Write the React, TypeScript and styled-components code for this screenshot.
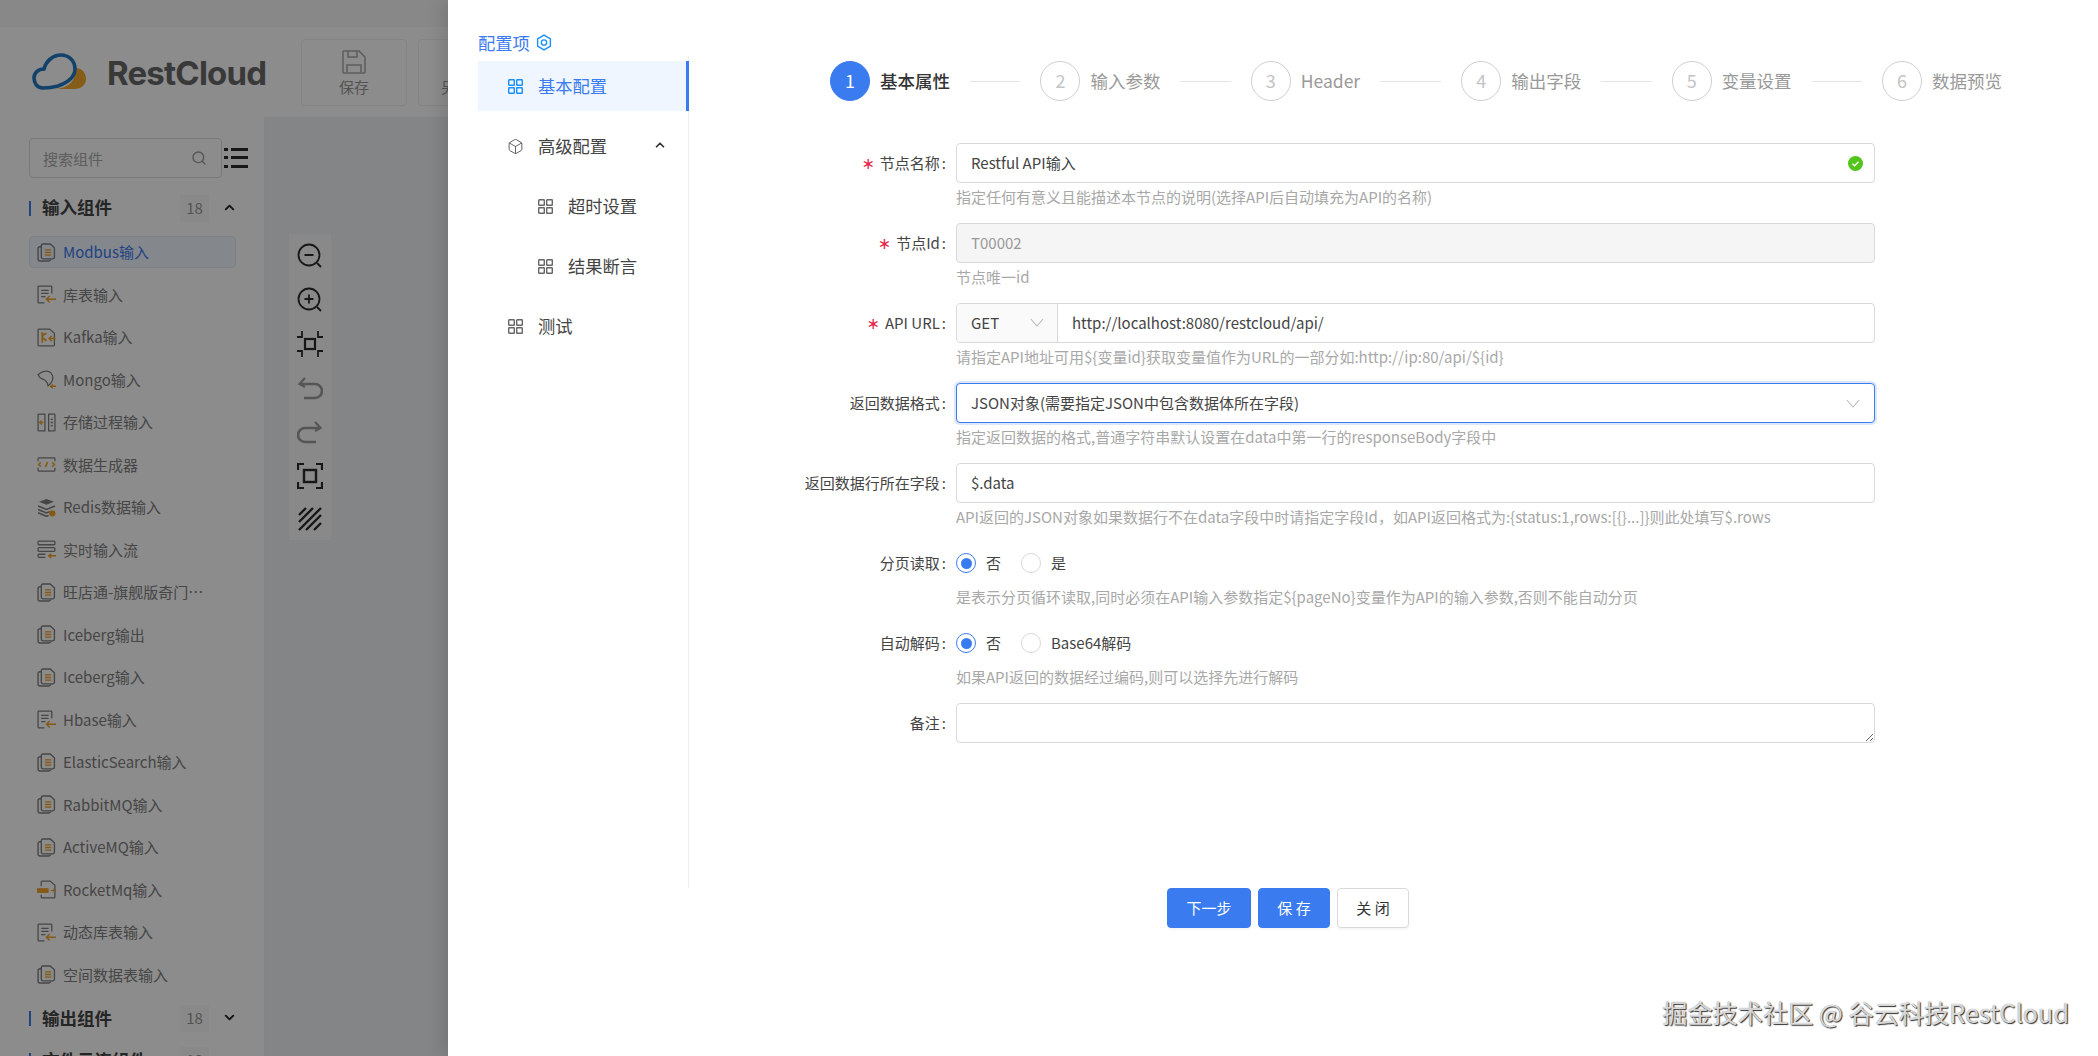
import React from 'react';
import styled, { createGlobalStyle } from 'styled-components';
import { ChevronDown, ChevronUp, Box, Search } from 'lucide-react';

const GlobalStyle = createGlobalStyle`
  html, body {
    margin: 0;
    height: 100%;
    overflow: hidden;
    background: #fff;
  }
  body, input, textarea, button {
    font-family: "Noto Sans CJK SC", "Noto Sans", sans-serif;
  }
  * { box-sizing: border-box; }
`;

const BLUE = '#3b7bf0';

const Page = styled.div`
  position: relative;
  width: 100vw;
  height: 100vh;
  overflow: hidden;
  display: flex;
  flex-direction: column;
  background: #fff;
`;

const Header = styled.div`
  flex: 0 0 117px;
  display: flex;
  align-items: flex-start;
  background: #fff;
  border-top: 27px solid #f8f8f8;
  padding: 12px 0 0 32px;
`;

const Brand = styled.div`
  display: flex;
  align-items: center;
  width: 269px;
  height: 66px;
  gap: 20px;
`;

const BrandName = styled.div`
  font-family: Inter, "Liberation Sans", sans-serif;
  font-size: 33px;
  font-weight: 700;
  letter-spacing: -0.8px;
  color: #686868;
  margin-top: 2px;
`;

const ToolButton = styled.div`
  width: 106px;
  height: 67px;
  margin-right: 11px;
  border: 1px solid #f1f1f1;
  border-radius: 4px;
  display: flex;
  flex-direction: column;
  align-items: center;
  gap: 3px;
  padding-top: 10px;
  color: #999;
  font-size: 15px;
  line-height: 20px;
`;

const Body = styled.div`
  flex: 1;
  display: flex;
  min-height: 0;
`;

const Sidebar = styled.div`
  width: 265px;
  padding: 21px 0 0 29px;
  background: #fff;
  border-right: 1px solid #eef0f2;
`;

const SearchRow = styled.div`
  display: flex;
  align-items: center;
  gap: 2px;
  margin-bottom: 16px;
`;

const SearchBox = styled.div`
  width: 193px;
  height: 40px;
  border: 1px solid #dcdcdc;
  border-radius: 4px;
  display: flex;
  align-items: center;
  justify-content: space-between;
  padding: 0 14px 0 13px;
  font-size: 15px;
  color: #aaa;
`;

const GroupRow = styled.div`
  display: flex;
  align-items: center;
  height: 28px;
  margin-bottom: 14px;

  & + & {
    margin-top: 1px;
  }
`;

const GroupBar = styled.span`
  width: 2px;
  height: 15px;
  background: ${BLUE};
  margin-right: 11px;
`;

const GroupName = styled.span`
  width: 138px;
  padding-bottom: 3px;
  font-size: 17.5px;
  font-weight: 700;
  color: #444;
`;

const Badge = styled.span`
  width: 29px;
  height: 27px;
  background: #fafafa;
  color: #999;
  font-size: 15px;
  line-height: 26px;
  text-align: center;
`;

const GroupArrow = styled.span`
  margin-left: 13px;
  display: flex;
  color: #222;
  padding-bottom: 2px;
`;

const ItemList = styled.div`
  display: flex;
  flex-direction: column;
  gap: 10.5px;
  margin-bottom: 14px;
`;

const Item = styled.div<{ $active?: boolean }>`
  width: 207px;
  height: 32px;
  display: flex;
  align-items: center;
  gap: 7px;
  padding-left: 7px;
  border: 1px solid ${(p) => (p.$active ? '#e2e8f4' : 'transparent')};
  border-radius: 4px;
  background: ${(p) => (p.$active ? '#f1f6ff' : 'transparent')};
  color: ${(p) => (p.$active ? BLUE : '#808080')};
  font-size: 15px;
`;

const ItemText = styled.span`
  max-width: 142px;
  margin-top: -1px;
  white-space: nowrap;
  overflow: hidden;
  text-overflow: ellipsis;
`;

const Canvas = styled.div`
  flex: 1;
  background: #f0f2f5;
  padding: 117px 0 0 24px;
`;

const ZoomBar = styled.div`
  width: 42px;
  height: 306px;
  background: #fafafa;
  display: flex;
  flex-direction: column;
  align-items: center;
  justify-content: space-between;
  padding: 9px 0 9px;
`;

const Overlay = styled.div`
  position: absolute;
  inset: 0;
  background: rgba(0, 0, 0, 0.45);
`;

const Drawer = styled.div`
  position: absolute;
  top: 0;
  right: 0;
  bottom: 0;
  left: 448px;
  background: #fff;
  display: flex;
  box-shadow: -6px 0 16px rgba(0, 0, 0, 0.12);
`;

const ConfigColumn = styled.div`
  flex: 0 0 241px;
  padding: 29px 0 0 30px;
`;

const ConfigTitle = styled.div`
  display: flex;
  align-items: center;
  gap: 6px;
  height: 27px;
  font-size: 17.3px;
  line-height: 27px;
  color: ${BLUE};
`;

const Menu = styled.div`
  width: 211px;
  height: 832px;
  padding-top: 5px;
  border-right: 1px solid #eeeeee;
`;

const MenuItem = styled.div<{ $active?: boolean; $sub?: boolean }>`
  position: relative;
  height: 50px;
  margin-bottom: 10px;
  width: 211px;
  display: flex;
  align-items: center;
  gap: 15px;
  padding-left: ${(p) => (p.$sub ? 60 : 30)}px;
  padding-bottom: 2px;
  font-size: 17.3px;
  color: ${(p) => (p.$active ? BLUE : '#444')};
  background: ${(p) => (p.$active ? '#eff6ff' : 'transparent')};
  border-right: ${(p) => (p.$active ? `3px solid ${BLUE}` : '0')};

  & > svg {
    margin-top: 3px;
  }
`;

const CubeIcon = styled(Box)`
  margin: 3px -1px 0 -1px;
`;

const MenuArrow = styled.span`
  margin-left: 31px;
  display: flex;
  color: #333;
`;

const MainColumn = styled.div`
  flex: 1;
  padding-top: 61px;
`;

const Steps = styled.div`
  display: flex;
  width: 1172px;
  margin-left: 141px;
  height: 40px;
  margin-bottom: 42px;
`;

const Step = styled.div<{ $last?: boolean }>`
  display: flex;
  align-items: center;
  flex: ${(p) => (p.$last ? '0 0 auto' : '1 1 0')};
`;

const StepDot = styled.div<{ $active?: boolean }>`
  flex: 0 0 40px;
  height: 40px;
  border-radius: 50%;
  border: 1px solid ${(p) => (p.$active ? BLUE : '#cfcfcf')};
  background: ${(p) => (p.$active ? BLUE : '#fff')};
  color: ${(p) => (p.$active ? '#fff' : '#c4c4c4')};
  display: flex;
  align-items: center;
  justify-content: center;
  padding-bottom: 2px;
  font-size: 18px;
`;

const StepTitle = styled.div<{ $active?: boolean }>`
  margin-left: 10px;
  padding-bottom: 2px;
  font-size: 17.5px;
  white-space: nowrap;
  font-weight: ${(p) => (p.$active ? 500 : 400)};
  color: ${(p) => (p.$active ? '#333' : '#999')};
`;

const StepLine = styled.div`
  flex: 1;
  height: 1px;
  margin: 0 20px;
  background: #e4e4e4;
`;

const FormRow = styled.div`
  display: flex;
  margin-bottom: 10px;
`;

const LabelCol = styled.div`
  flex: 0 0 267px;
  height: 40px;
  padding: 0 10px 2px 0;
  display: flex;
  align-items: center;
  justify-content: flex-end;
  font-size: 15px;
  color: #444;
  white-space: nowrap;
`;

const Star = styled.span`
  color: #e0284a;
  margin-right: 5px;
  margin-top: 2px;
  font-size: 16px;
  font-family: "DejaVu Sans", sans-serif;
`;

const Colon = styled.span`
  margin-left: 2px;
`;

const FieldCol = styled.div`
  flex: 0 0 919px;
`;

const FieldBox = styled.div<{ $focused?: boolean; $disabled?: boolean }>`
  position: relative;
  height: 40px;
  display: flex;
  align-items: center;
  border: 1px solid ${(p) => (p.$focused ? BLUE : '#d9d9d9')};
  border-radius: 4px;
  background: ${(p) => (p.$disabled ? '#f5f5f5' : '#fff')};
  box-shadow: ${(p) => (p.$focused ? '0 0 0 2px rgba(59, 123, 240, 0.18)' : 'none')};
  overflow: hidden;
`;

const TextInput = styled.input<{ $disabled?: boolean }>`
  flex: 1;
  height: 100%;
  min-width: 0;
  border: 0;
  outline: 0;
  padding: 0 14px 2px;
  background: transparent;
  font-size: 15px;
  color: ${(p) => (p.$disabled ? '#999' : '#444')};
`;

const MethodSelect = styled.div`
  flex: 0 0 101px;
  height: 100%;
  background: #fafafa;
  border-right: 1px solid #d9d9d9;
  display: flex;
  align-items: center;
  justify-content: space-between;
  padding: 0 13px 2px 11px;
  font-size: 15px;
  color: #444;

  & > span {
    padding-left: 3px;
  }
`;

const SelectText = styled.div`
  flex: 1;
  padding: 0 0 2px 14px;
  font-size: 15px;
  color: #444;
`;

const SuccessMark = styled.span`
  display: flex;
  margin-right: 11px;
`;

const SelectArrow = styled.span`
  display: flex;
  margin-right: 14px;
`;

const Hint = styled.div`
  height: 30px;
  line-height: 28px;
  font-size: 15px;
  color: #a8a8a8;
  white-space: nowrap;
`;

const RadioRow = styled.div`
  height: 40px;
  display: flex;
  align-items: center;
  font-size: 15px;
  color: #444;
`;

const RadioOption = styled.div`
  display: flex;
  align-items: center;
  gap: 10px;
  margin-right: 20px;
  padding-bottom: 2px;
`;

const RadioDot = styled.span<{ $checked?: boolean }>`
  width: 20px;
  height: 20px;
  margin-top: 2px;
  border-radius: 50%;
  border: 1px solid ${(p) => (p.$checked ? BLUE : '#d9d9d9')};
  display: flex;
  align-items: center;
  justify-content: center;
  &::after {
    content: '';
    width: 11px;
    height: 11px;
    border-radius: 50%;
    background: ${(p) => (p.$checked ? BLUE : 'transparent')};
  }
`;

const NoteArea = styled.textarea`
  display: block;
  width: 100%;
  height: 40px;
  border: 1px solid #d9d9d9;
  border-radius: 4px;
  outline: 0;
  resize: vertical;
  font-size: 15px;
`;

const Footer = styled.div`
  display: flex;
  gap: 7px;
  margin: 145px 0 0 478px;
`;

const FooterButton = styled.button<{ $primary?: boolean; $w: number }>`
  width: ${(p) => p.$w}px;
  height: 40px;
  padding: 0 0 2px;
  border-radius: 4px;
  border: 1px solid ${(p) => (p.$primary ? BLUE : '#d9d9d9')};
  background: ${(p) => (p.$primary ? BLUE : '#fff')};
  color: ${(p) => (p.$primary ? '#fff' : '#333')};
  font-size: 15px;
  box-shadow: 0 2px 0 rgba(0, 0, 0, 0.03);
`;

const Watermark = styled.div`
  position: absolute;
  right: 29px;
  bottom: 27px;
  font-size: 25.2px;
  line-height: 34px;
  white-space: nowrap;
  color: rgba(255, 255, 255, 0.8);
  text-shadow: 1px 1px 1px #333, 0 0 1px #666;
`;

const Logo = () => (
  <svg width="55" height="38" viewBox="0 0 55 38" fill="none">
    <path d="M44 15c6 0 10 5 10 11 0 6-5 10-12 10H24c10-1 20-6 20-21z" fill="#f2a92e" />
    <path
      d="M11 35C5 35 2 30 2 25c0-5 4-9 10-9 2-8 9-14 17-14 8 0 14 6 14 14 0 9-9 14-17 17-5 1.400-10 2-15 2z"
      stroke="#2178c2"
      strokeWidth="3.600"
    />
  </svg>
);

const SaveIcon = () => (
  <svg width="24" height="24" viewBox="0 0 24 24" fill="none" stroke="#a8a8a8" strokeWidth="1.500">
    <path d="M2 1h15l6 6v15a1 1 0 0 1-1 1H2a1 1 0 0 1-1-1V2a1 1 0 0 1 1-1z" />
    <path d="M6 1v6h9V1M5 22v-7h14v7" />
  </svg>
);

const ListIcon = () => (
  <svg width="24" height="22" viewBox="0 0 24 22" fill="#2a2a2a">
    <rect x="0" y="1" width="4" height="3" />
    <rect x="7" y="1" width="17" height="3" />
    <rect x="0" y="9" width="4" height="3" />
    <rect x="7" y="9" width="17" height="3" />
    <rect x="0" y="18" width="4" height="3" />
    <rect x="7" y="18" width="17" height="3" />
  </svg>
);

const iconLine = '#808080';
const iconMark = '#f0a428';

const DocIcon = () => (
  <svg width="19" height="19" viewBox="0 0 18 18" fill="none" stroke={iconLine} strokeWidth="1.300">
    <path d="M4 3.500H2.800A1.800 1.800 0 0 0 1 5.300v9.900A1.800 1.800 0 0 0 2.800 17h8.400a2 2 0 0 0 1.800-1.500" />
    <path d="M5.500 1h7l4 3.600v9a1.400 1.400 0 0 1-1.400 1.400H5.500a1.400 1.400 0 0 1-1.400-1.400V2.400A1.400 1.400 0 0 1 5.500 1z" />
    <path d="M7.500 6.500h6M7.500 9h6M7.500 11.500h6" stroke={iconMark} />
  </svg>
);

const TableIcon = () => (
  <svg width="19" height="19" viewBox="0 0 18 18" fill="none" stroke={iconLine} strokeWidth="1.200">
    <path d="M7 17H1.800A.800.800 0 0 1 1 16.200V1.800A.800.800 0 0 1 1.800 1h11.400a.800.800 0 0 1 .800.800V8" />
    <path d="M4 5h7M4 8h7M4 11h4" />
    <path d="M18 13.500h-9M12 10.500l-3 3 3 3" stroke={iconMark} strokeWidth="1.400" />
  </svg>
);

const KafkaIcon = () => (
  <svg width="19" height="19" viewBox="0 0 18 18" fill="none" stroke={iconLine} strokeWidth="1.200">
    <path d="M1.800 1H12l4.500 4v11.200a.800.800 0 0 1-.800.800H1.800a.800.800 0 0 1-.800-.800V1.800A.800.800 0 0 1 1.800 1z" />
    <path d="M5 4v10M5 7l4-2M5 9l4 3" stroke={iconMark} strokeWidth="1.700" />
    <path d="M17.500 10h-6M14 7.500L11.500 10l2.500 2.500" stroke={iconMark} strokeWidth="1.400" />
  </svg>
);

const LeafIcon = () => (
  <svg width="19" height="19" viewBox="0 0 18 18" fill="none" stroke={iconLine} strokeWidth="1.200">
    <path d="M1 4.500C3 2.500 6 1 9 1c3.500 0 6 3 6 6.500 0 3-2 5.500-4.500 7.500C10 11.500 8 9.500 5 8.500 3 7.800 1.700 6.300 1 4.500z" />
    <path d="M18 15.500h-5M15 13.800l-2 1.700 2 1.700" stroke={iconMark} strokeWidth="1.400" />
  </svg>
);

const SplitIcon = () => (
  <svg width="19" height="19" viewBox="0 0 18 18" fill="none" stroke={iconLine} strokeWidth="1.200">
    <path d="M7.500 1H1.700a.700.700 0 0 0-.700.700v14.600a.700.700 0 0 0 .700.700h5.800V1zM11 1h5.300a.700.700 0 0 1 .700.700v14.600a.700.700 0 0 1-.700.700H11V1z" />
    <path d="M6 9H2.500M4.500 7L2.500 9l2 2" stroke={iconMark} strokeWidth="1.300" />
    <path d="M13 6h2M13 9h2M13 12h2" />
  </svg>
);

const CodeIcon = () => (
  <svg width="19" height="19" viewBox="0 0 18 18" fill="none" stroke={iconLine} strokeWidth="1.200">
    <path d="M1 6V3.500a.800.800 0 0 1 .800-.800h14.400a.800.800 0 0 1 .800.800V6M1 12v2.500a.800.800 0 0 0 .800.800h14.400a.800.800 0 0 0 .800-.800V12" />
    <path d="M3.600 7L1.500 9l2.100 2M14.400 7l2.100 2-2.100 2M10 6.500L8 11.500" stroke={iconMark} strokeWidth="1.400" />
  </svg>
);

const RedisIcon = () => (
  <svg width="19" height="19" viewBox="0 0 18 18" fill="none">
    <path d="M9 1l7 2.600-7 2.800L2 3.600z" fill={iconLine} />
    <path d="M1 7.500l8 3.300 8-3.300M1 10.800l8 3.300 3-1.200M1 14l8 3.300 2-.800" stroke={iconLine} strokeWidth="1.500" />
    <circle cx="14.500" cy="14.500" r="3" fill={iconMark} />
  </svg>
);

const StreamIcon = () => (
  <svg width="19" height="19" viewBox="0 0 18 18" fill="none" stroke={iconLine} strokeWidth="1.200">
    <rect x="1" y="1" width="16" height="3.500" rx="1" />
    <rect x="1" y="7.200" width="16" height="3.500" rx="1" />
    <path d="M8 13.500H2a1 1 0 0 0-1 1v1a1 1 0 0 0 1 1h6" />
    <path d="M18 15h-7M13.500 13L11 15l2.500 2" stroke={iconMark} strokeWidth="1.400" />
  </svg>
);

const RocketIcon = () => (
  <svg width="19" height="19" viewBox="0 0 18 18" fill="none" stroke={iconLine} strokeWidth="1.200">
    <path d="M4 6V2a1 1 0 0 1 1-1h7.500L17 5v11a1 1 0 0 1-1 1H5a1 1 0 0 1-1-1v-2" />
    <path d="M0 10h11" stroke={iconMark} strokeWidth="4.500" />
    <path d="M13 10h4M15.500 8.500L17 10l-1.500 1.500" stroke={iconMark} strokeWidth="1" />
  </svg>
);

const barStroke = { fill: 'none', stroke: '#2a2a2a', strokeWidth: 1.800 };
const barFade = { fill: 'none', stroke: '#9c9c9c', strokeWidth: 2.600 };

const ZoomOutIcon = () => (
  <svg width="26" height="26" viewBox="0 0 26 26" {...barStroke}>
    <circle cx="12" cy="12" r="10.500" />
    <path d="M7.500 12h9M20 20l4 4" />
  </svg>
);

const ZoomInIcon = () => (
  <svg width="26" height="26" viewBox="0 0 26 26" {...barStroke}>
    <circle cx="12" cy="12" r="10.500" />
    <path d="M7.500 12h9M12 7.500v9M20 20l4 4" />
  </svg>
);

const FitIcon = () => (
  <svg width="28" height="28" viewBox="0 0 28 28" {...barStroke}>
    <rect x="9" y="9" width="10" height="10" strokeWidth="2.200" />
    <path d="M1 7h5V1M27 7h-5V1M1 21h5v6M27 21h-5v6" />
  </svg>
);

const UndoIcon = () => (
  <svg width="26" height="26" viewBox="0 0 26 26" {...barFade}>
    <path d="M3 8h15a6.500 6.500 0 0 1 0 14H7" />
    <path d="M8 2L2.500 8 8 11" strokeWidth="2.200" />
  </svg>
);

const RedoIcon = () => (
  <svg width="26" height="26" viewBox="0 0 26 26" {...barFade}>
    <path d="M23 8H8a6.500 6.500 0 0 0 0 14h11" />
    <path d="M18 2l5.500 6L18 11" strokeWidth="2.200" />
  </svg>
);

const FrameIcon = () => (
  <svg width="26" height="26" viewBox="0 0 26 26" fill="none" stroke="#2a2a2a" strokeWidth="2.200">
    <rect x="7" y="7" width="12" height="12" strokeWidth="2.400" />
    <path d="M1 7V1h6M19 1h6v6M1 19v6h6M25 19v6h-6" />
  </svg>
);

const HatchIcon = () => (
  <svg width="24" height="24" viewBox="0 0 24 24" fill="none" stroke="#2a2a2a" strokeWidth="2.400">
    <path d="M1 8l7-7M1 15L15 1M1 23L23 1M8 23l15-15M16 23l7-7" />
  </svg>
);

const GridIcon = ({ color }: { color: string }) => (
  <svg width="15" height="15" viewBox="0 0 15 15" fill="none" stroke={color} strokeWidth="1.400">
    <rect x="0.700" y="0.700" width="5.600" height="5.600" rx="0.600" />
    <rect x="8.700" y="0.700" width="5.600" height="5.600" rx="0.600" />
    <rect x="0.700" y="8.700" width="5.600" height="5.600" rx="0.600" />
    <rect x="8.700" y="8.700" width="5.600" height="5.600" rx="0.600" />
  </svg>
);

const HexIcon = () => (
  <svg width="16" height="17" viewBox="0 0 15 16" fill="none" stroke="#1890ff" strokeWidth="1.300">
    <path d="M7.500 1l6 3.500v7l-6 3.500-6-3.500v-7z" />
    <circle cx="7.500" cy="8" r="2.500" />
  </svg>
);

const CheckCircle = () => (
  <svg width="15" height="15" viewBox="0 0 15 15">
    <circle cx="7.500" cy="7.500" r="7.500" fill="#52c41a" />
    <path d="M4.500 7.700l2.100 2.100 3.900-4" fill="none" stroke="#fff" strokeWidth="1.400" />
  </svg>
);

const ThinChevron = () => (
  <svg width="14" height="9" viewBox="0 0 16 10" fill="none" stroke="#b8b8b8" strokeWidth="1.200">
    <path d="M1 1l7 8 7-8" />
  </svg>
);

const inputItems: [React.ReactNode, string][] = [
  [<DocIcon />, 'Modbus输入'],
  [<TableIcon />, '库表输入'],
  [<KafkaIcon />, 'Kafka输入'],
  [<LeafIcon />, 'Mongo输入'],
  [<SplitIcon />, '存储过程输入'],
  [<CodeIcon />, '数据生成器'],
  [<RedisIcon />, 'Redis数据输入'],
  [<StreamIcon />, '实时输入流'],
  [<DocIcon />, '旺店通-旗舰版奇门输入组件'],
  [<DocIcon />, 'Iceberg输出'],
  [<DocIcon />, 'Iceberg输入'],
  [<TableIcon />, 'Hbase输入'],
  [<DocIcon />, 'ElasticSearch输入'],
  [<DocIcon />, 'RabbitMQ输入'],
  [<DocIcon />, 'ActiveMQ输入'],
  [<RocketIcon />, 'RocketMq输入'],
  [<TableIcon />, '动态库表输入'],
  [<DocIcon />, '空间数据表输入'],
];

const stepNames = ['基本属性', '输入参数', 'Header', '输出字段', '变量设置', '数据预览'];

const Label = ({ text, required }: { text: string; required?: boolean }) => (
  <LabelCol>
    {required && <Star>∗</Star>}
    {text}
    <Colon>:</Colon>
  </LabelCol>
);

const App: React.FC = () => {
  return (
    <>
      <GlobalStyle />
      <Page>
        <Header>
          <Brand>
            <Logo />
            <BrandName>RestCloud</BrandName>
          </Brand>
          <ToolButton>
            <SaveIcon />
            保存
          </ToolButton>
          <ToolButton>
            <SaveIcon />
            另存模板
          </ToolButton>
        </Header>
        <Body>
          <Sidebar>
            <SearchRow>
              <SearchBox>
                搜索组件
                <Search size={16} color="#999" />
              </SearchBox>
              <ListIcon />
            </SearchRow>
            <GroupRow>
              <GroupBar />
              <GroupName>输入组件</GroupName>
              <Badge>18</Badge>
              <GroupArrow>
                <ChevronUp size={15} strokeWidth={3} />
              </GroupArrow>
            </GroupRow>
            <ItemList>
              {inputItems.map(([icon, name], i) => (
                <Item key={name} $active={i === 0}>
                  {icon}
                  <ItemText>{name}</ItemText>
                </Item>
              ))}
            </ItemList>
            <GroupRow>
              <GroupBar />
              <GroupName>输出组件</GroupName>
              <Badge>18</Badge>
              <GroupArrow>
                <ChevronDown size={15} strokeWidth={3} />
              </GroupArrow>
            </GroupRow>
            <GroupRow>
              <GroupBar />
              <GroupName>文件云连组件</GroupName>
              <Badge>18</Badge>
            </GroupRow>
          </Sidebar>
          <Canvas>
            <ZoomBar>
              <ZoomOutIcon />
              <ZoomInIcon />
              <FitIcon />
              <UndoIcon />
              <RedoIcon />
              <FrameIcon />
              <HatchIcon />
            </ZoomBar>
          </Canvas>
        </Body>
        <Overlay />
        <Drawer>
          <ConfigColumn>
            <ConfigTitle>
              配置项
              <HexIcon />
            </ConfigTitle>
            <Menu>
              <MenuItem $active>
                <GridIcon color="#1890ff" />
                基本配置
              </MenuItem>
              <MenuItem>
                <CubeIcon size={17} strokeWidth={1.300} color="#555" />
                高级配置
                <MenuArrow>
                  <ChevronUp size={14} strokeWidth={3} />
                </MenuArrow>
              </MenuItem>
              <MenuItem $sub>
                <GridIcon color="#666" />
                超时设置
              </MenuItem>
              <MenuItem $sub>
                <GridIcon color="#666" />
                结果断言
              </MenuItem>
              <MenuItem>
                <GridIcon color="#666" />
                测试
              </MenuItem>
            </Menu>
          </ConfigColumn>
          <MainColumn>
            <Steps>
              {stepNames.map((name, i) => (
                <Step key={name} $last={i === stepNames.length - 1}>
                  <StepDot $active={i === 0}>{i + 1}</StepDot>
                  <StepTitle $active={i === 0}>{name}</StepTitle>
                  {i < stepNames.length - 1 && <StepLine />}
                </Step>
              ))}
            </Steps>

            <FormRow>
              <Label text="节点名称" required />
              <FieldCol>
                <FieldBox>
                  <TextInput readOnly value="Restful API输入" />
                  <SuccessMark>
                    <CheckCircle />
                  </SuccessMark>
                </FieldBox>
                <Hint>指定任何有意义且能描述本节点的说明(选择API后自动填充为API的名称)</Hint>
              </FieldCol>
            </FormRow>

            <FormRow>
              <Label text="节点Id" required />
              <FieldCol>
                <FieldBox $disabled>
                  <TextInput readOnly $disabled value="T00002" />
                </FieldBox>
                <Hint>节点唯一id</Hint>
              </FieldCol>
            </FormRow>

            <FormRow>
              <Label text="API URL" required />
              <FieldCol>
                <FieldBox>
                  <MethodSelect>
                    <span>GET</span>
                    <ThinChevron />
                  </MethodSelect>
                  <TextInput readOnly value="http://localhost:8080/restcloud/api/" />
                </FieldBox>
                <Hint>{'请指定API地址可用${变量id}获取变量值作为URL的一部分如:http://ip:80/api/${id}'}</Hint>
              </FieldCol>
            </FormRow>

            <FormRow>
              <Label text="返回数据格式" />
              <FieldCol>
                <FieldBox $focused>
                  <SelectText>JSON对象(需要指定JSON中包含数据体所在字段)</SelectText>
                  <SelectArrow>
                    <ThinChevron />
                  </SelectArrow>
                </FieldBox>
                <Hint>指定返回数据的格式,普通字符串默认设置在data中第一行的responseBody字段中</Hint>
              </FieldCol>
            </FormRow>

            <FormRow>
              <Label text="返回数据行所在字段" />
              <FieldCol>
                <FieldBox>
                  <TextInput readOnly value="$.data" />
                </FieldBox>
                <Hint>
                  API返回的JSON对象如果数据行不在data字段中时请指定字段Id，如API返回格式为:{'{status:1,rows:[{}...]}'}则此处填写$.rows
                </Hint>
              </FieldCol>
            </FormRow>

            <FormRow>
              <Label text="分页读取" />
              <FieldCol>
                <RadioRow>
                  <RadioOption>
                    <RadioDot $checked />否
                  </RadioOption>
                  <RadioOption>
                    <RadioDot />是
                  </RadioOption>
                </RadioRow>
                <Hint>{'是表示分页循环读取,同时必须在API输入参数指定${pageNo}变量作为API的输入参数,否则不能自动分页'}</Hint>
              </FieldCol>
            </FormRow>

            <FormRow>
              <Label text="自动解码" />
              <FieldCol>
                <RadioRow>
                  <RadioOption>
                    <RadioDot $checked />否
                  </RadioOption>
                  <RadioOption>
                    <RadioDot />
                    Base64解码
                  </RadioOption>
                </RadioRow>
                <Hint>如果API返回的数据经过编码,则可以选择先进行解码</Hint>
              </FieldCol>
            </FormRow>

            <FormRow>
              <Label text="备注" />
              <FieldCol>
                <NoteArea readOnly />
              </FieldCol>
            </FormRow>

            <Footer>
              <FooterButton $primary $w={84}>下一步</FooterButton>
              <FooterButton $primary $w={72}>保 存</FooterButton>
              <FooterButton $w={72}>关 闭</FooterButton>
            </Footer>
          </MainColumn>
          <Watermark>掘金技术社区 @ 谷云科技RestCloud</Watermark>
        </Drawer>
      </Page>
    </>
  );
};

export default App;
